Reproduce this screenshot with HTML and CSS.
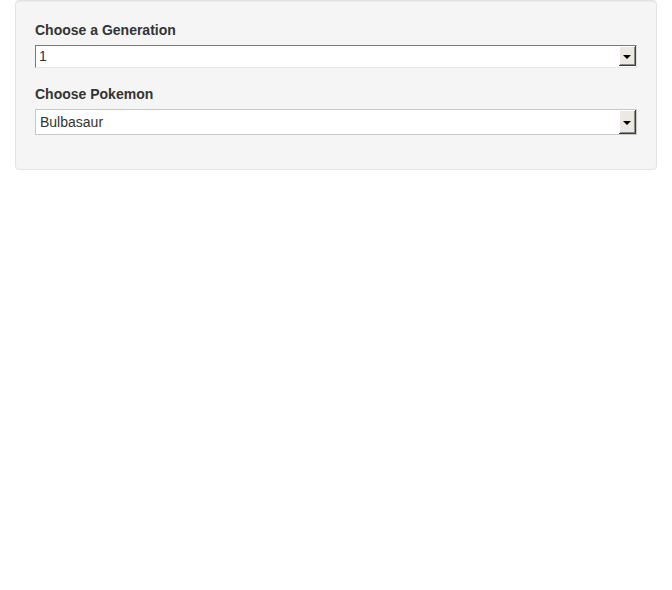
FILE: index.html
```html
<!DOCTYPE html>
<html lang="en">
<head>
<meta charset="utf-8">
<title>Pokemon</title>
<link rel="stylesheet" href="styles.css">
</head>
<body>
<div class="container">
  <div class="well">
    <div class="form-group">
      <label class="control-label">Choose a Generation</label>
      <div class="select select-focus">
        <span class="select-value gen">1</span>
        <span class="select-btn"><span class="tri"></span></span>
      </div>
    </div>
    <div class="form-group last">
      <label class="control-label">Choose Pokemon</label>
      <div class="select select-plain">
        <span class="select-value">Bulbasaur</span>
        <span class="select-btn"><span class="tri"></span></span>
      </div>
    </div>
  </div>
</div>
</body>
</html>
```
FILE: styles.css
```css
html, body {
  margin: 0;
  padding: 0;
  background: #ffffff;
}
body {
  font-family: "Liberation Sans", Arial, Helvetica, sans-serif;
  font-size: 14px;
  line-height: 20px;
  color: #333333;
}
.container {
  padding: 0 15px;
}
.well {
  background: #f5f5f5;
  border: 1px solid #e3e3e3;
  border-radius: 4px;
  box-shadow: inset 0 1px 1px rgba(0, 0, 0, 0.05);
  padding: 19px 19px 34px;
  display: flex;
  flex-direction: column;
  gap: 16px;
}
.form-group {
  display: flex;
  flex-direction: column;
  gap: 5px;
}
.control-label {
  display: block;
  font-weight: bold;
  font-size: 14px;
  line-height: 20px;
  color: #333333;
}
.select {
  display: flex;
  align-items: stretch;
  background: #ffffff;
  box-sizing: border-box;
}
.select-focus {
  height: 23px;
  border-top: 1px solid #7a7a7a;
  border-left: 1px solid #7a7a7a;
  border-right: 1px solid #e2e2e2;
  border-bottom: 1px solid #e8e8e8;
  padding: 0 0 1px 0;
}
.select-plain {
  height: 26px;
  border: 1px solid #c8c8c8;
}
.select-value {
  flex: 1;
  display: flex;
  align-items: center;
  padding-left: 4px;
  font-size: 14px;
  color: #333333;
}
.select-value.gen {
  padding-left: 3px;
}
.select-btn {
  background: #ece9e2;
  box-shadow: inset 1px 1px 0 #ffffff, inset -1px -1px 0 #8a8a8a;
  border-right: 1px solid #3c3c3c;
  border-bottom: 1px solid #3c3c3c;
  display: flex;
  align-items: center;
  justify-content: center;
  box-sizing: border-box;
  width: 17px;
}
.tri {
  width: 0;
  height: 0;
  border-left: 4px solid transparent;
  border-right: 4px solid transparent;
  border-top: 4px solid #000000;
  margin-top: 2px;
}
```
